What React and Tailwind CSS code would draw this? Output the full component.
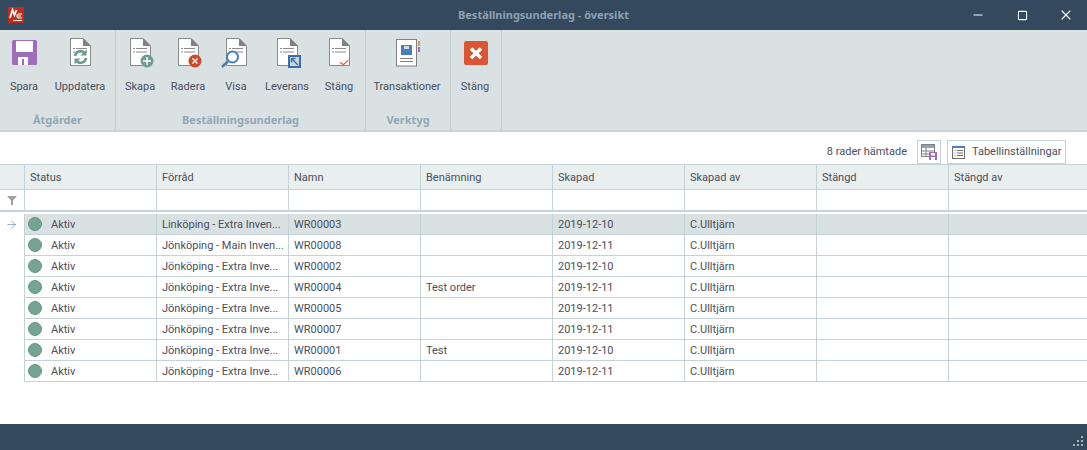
import React from 'react';
import { Minus, Square, X, ArrowRight } from 'lucide-react';

const COLUMNS = ['Status', 'Förråd', 'Namn', 'Benämning', 'Skapad', 'Skapad av', 'Stängd', 'Stängd av'];

const ROWS = [
  ['Linköping - Extra Inven...', 'WR00003', '', '2019-12-10'],
  ['Jönköping - Main Inven...', 'WR00008', '', '2019-12-11'],
  ['Jönköping - Extra Inve...', 'WR00002', '', '2019-12-10'],
  ['Jönköping - Extra Inve...', 'WR00004', 'Test order', '2019-12-11'],
  ['Jönköping - Extra Inve...', 'WR00005', '', '2019-12-11'],
  ['Jönköping - Extra Inve...', 'WR00007', '', '2019-12-11'],
  ['Jönköping - Extra Inve...', 'WR00001', 'Test', '2019-12-10'],
  ['Jönköping - Extra Inve...', 'WR00006', '', '2019-12-11'],
];

const Doc = ({ children }) => (
  <svg width="32" height="32" viewBox="0 0 32 32" fill="none">
    <path d="M6.5 1.5H19L26.5 9V28.5H6.5Z" fill="#fff" stroke="#8a8a8a" />
    <path d="M19 1L27 9H19Z" fill="#808080" />
    <path d="M9 11.5h2M12 11.5h11M9 15h2M12 15h11" stroke="#8a8a8a" />
    {children}
  </svg>
);

const icons = {
  save: (
    <svg width="32" height="32" viewBox="0 0 32 32">
      <rect x="4" y="3" width="25" height="25" rx="1.5" fill="#a06cbc" />
      <rect x="8" y="4" width="17" height="11" fill="#fff" />
      <rect x="10" y="20" width="10" height="8" fill="#fff" />
      <rect x="14" y="22" width="2" height="6" fill="#a06cbc" />
    </svg>
  ),
  refresh: (
    <Doc>
      <path d="M11 19a5.5 5.5 0 0 1 9.5-3" stroke="#6d9f8c" strokeWidth="2.6" />
      <path d="M22.5 12.5v6h-6Z" fill="#6d9f8c" />
      <path d="M22 21a5.5 5.5 0 0 1-9.5 3" stroke="#6d9f8c" strokeWidth="2.6" />
      <path d="M10.5 27.5v-6h6Z" fill="#6d9f8c" />
    </Doc>
  ),
  add: (
    <Doc>
      <circle cx="23" cy="24" r="6.5" fill="#6d9f8c" />
      <path d="M23 20v8M19 24h8" stroke="#fff" strokeWidth="1.4" />
    </Doc>
  ),
  del: (
    <Doc>
      <circle cx="23" cy="24" r="6.5" fill="#cc4a2c" />
      <path d="M20.5 21.5l5 5M25.5 21.5l-5 5" stroke="#fff" strokeWidth="1.4" />
    </Doc>
  ),
  view: (
    <Doc>
      <circle cx="12.5" cy="20" r="5.5" fill="#fff" stroke="#4a80b8" strokeWidth="2" />
      <path d="M8 24.5L2 30" stroke="#4a80b8" strokeWidth="2.6" />
    </Doc>
  ),
  delivery: (
    <Doc>
      <rect x="17" y="18" width="13" height="13" fill="#3f6da6" />
      <rect x="19" y="20" width="9" height="9" fill="#c5d6e6" />
      <path d="M20.5 21.5L27 28M20.5 21.5h4M20.5 21.5v4" stroke="#3f6da6" strokeWidth="1.4" />
    </Doc>
  ),
  close: (
    <Doc>
      <path d="M17 25.3l3.3 2.4 5-4.4" stroke="#e05a50" strokeWidth="1.3" />
    </Doc>
  ),
  transactions: (
    <svg width="32" height="32" viewBox="0 0 32 32">
      <rect x="5.5" y="2.5" width="20" height="26.5" fill="#fff" stroke="#808080" />
      <rect x="10" y="8" width="11" height="10" fill="#4a80b8" />
      <rect x="13" y="9" width="5" height="3" fill="#cfdcea" />
      <path d="M9 21.5h13M9 24.5h13" stroke="#808080" />
      <rect x="27" y="4" width="2" height="5" fill="#e8924a" />
      <rect x="27" y="10" width="2" height="5" fill="#a06cbc" />
    </svg>
  ),
  exit: (
    <svg width="32" height="32" viewBox="0 0 32 32">
      <rect x="5" y="4" width="24" height="24" rx="2" fill="#da5533" />
      <path d="M12 11.5l10 9.5M22 11.5l-10 9.5" stroke="#fff" strokeWidth="3.6" />
    </svg>
  ),
};

const RibbonButton = ({ icon, label, width }) => (
  <div className={`flex flex-col items-center ${width}`}>
    <div className="mt-[7px] h-[32px]">{icons[icon]}</div>
    <div className="mt-[11px] text-[11px] leading-[14px] whitespace-nowrap text-[#4a4f5c]">{label}</div>
  </div>
);

const RibbonGroup = ({ title, width, children }) => (
  <div className={`flex flex-col border-r border-[#c3cdcf] ${width}`}>
    <div className="flex h-[81px]">{children}</div>
    <div className="h-[19px] text-center font-['Noto_Sans',sans-serif] text-[11px] font-bold leading-[18px] text-[#93a7b8]">{title}</div>
  </div>
);

const Logo = () => (
  <svg width="16" height="16" viewBox="0 0 16 16">
    <rect width="16" height="16" fill="#bf2d1c" />
    <path d="M2 11L4.5 3 6.5 8 8.5 3" stroke="#fff" strokeWidth="1.8" fill="none" />
    <path d="M14 7H10.5Q9 7 9 9 9 11 10.5 11H14M9.5 9H13M5 13.5H14" stroke="#fff" strokeWidth="1.2" fill="none" />
  </svg>
);

const Cell = ({ children }) => (
  <div className="flex w-[132px] shrink-0 items-center overflow-hidden whitespace-nowrap border-r border-[#c5d3d9] pl-[5px] pt-[2px]">
    {children}
  </div>
);

const GridRow = ({ row, selected }) => (
  <div className="flex h-[21px]">
    <div className="flex w-[25px] shrink-0 items-center justify-center border-r border-[#c5d3d9] pr-[2px]">
      {selected && <ArrowRight size={13} strokeWidth={1} className="text-[#3f6da6]" />}
    </div>
    <div className={`flex flex-1 border-b border-[#c5d3d9] ${selected ? 'bg-[#d9e1e2]' : ''}`}>
      <Cell>
        <span className="-ml-[2px] -mt-[2px] h-[14px] w-[14px] rounded-full border border-[#659684] bg-[#75a592]" />
        <span className="ml-[9px]">Aktiv</span>
      </Cell>
      <Cell>{row[0]}</Cell>
      <Cell>{row[1]}</Cell>
      <Cell>{row[2]}</Cell>
      <Cell>{row[3]}</Cell>
      <Cell>C.Ulltjärn</Cell>
      <Cell />
      <div className="flex-1" />
    </div>
  </div>
);

export default function App() {
  return (
    <div className="flex h-[450px] w-[1087px] flex-col overflow-hidden bg-white font-['Roboto',sans-serif] text-[11px] text-[#4a4f5c]">
      {/* titlebar */}
      <div className="flex h-[30px] shrink-0 items-center bg-[#34495e] pl-[8px]">
        <Logo />
        <div className="flex-1 pl-[107px] text-center font-['Noto_Sans',sans-serif] text-[11px] font-bold text-[#8fa0b0]">Beställningsunderlag - översikt</div>
        <div className="flex items-center text-white">
          <div className="flex w-[44px] justify-center"><Minus size={14} strokeWidth={1.7} /></div>
          <div className="flex w-[44px] justify-center"><Square size={11} strokeWidth={2.2} /></div>
          <div className="flex w-[43px] justify-center"><X size={16} strokeWidth={1.7} /></div>
        </div>
      </div>

      {/* ribbon */}
      <div className="flex h-[102px] shrink-0 border-b-2 border-[#c9d2d5] bg-[#d9e1e2]">
        <RibbonGroup title="Åtgärder" width="w-[116px]">
          <RibbonButton icon="save" label="Spara" width="w-[48px]" />
          <RibbonButton icon="refresh" label="Uppdatera" width="w-[64px]" />
        </RibbonGroup>
        <RibbonGroup title="Beställningsunderlag" width="w-[250px]">
          <RibbonButton icon="add" label="Skapa" width="w-[48px]" />
          <RibbonButton icon="del" label="Radera" width="w-[48px]" />
          <RibbonButton icon="view" label="Visa" width="w-[48px]" />
          <RibbonButton icon="delivery" label="Leverans" width="w-[54px]" />
          <RibbonButton icon="close" label="Stäng" width="w-[50px]" />
        </RibbonGroup>
        <RibbonGroup title="Verktyg" width="w-[85px]">
          <RibbonButton icon="transactions" label="Transaktioner" width="w-[82px]" />
        </RibbonGroup>
        <RibbonGroup title="" width="w-[51px]">
          <RibbonButton icon="exit" label="Stäng" width="w-[48px]" />
        </RibbonGroup>
      </div>

      {/* toolbar */}
      <div className="flex h-[32px] shrink-0 items-end justify-end pr-[21px]">
        <span className="mr-[10px] mb-[4px]">8 rader hämtade</span>
        <button className="mr-[6px] flex h-[24px] w-[24px] items-center justify-center border border-[#c5d3d9]">
          <svg width="16" height="16" viewBox="0 0 16 16">
            <rect x="0.5" y="0.5" width="13" height="12" fill="#fff" stroke="#808080" />
            <rect x="1" y="1" width="12" height="3" fill="#8fa3b8" />
            <path d="M1 7h12M1 10h7M5 4v8" stroke="#808080" />
            <rect x="8" y="8" width="8" height="8" fill="#a06cbc" />
            <rect x="10" y="9" width="4" height="2.5" fill="#fff" />
            <rect x="10" y="13" width="4" height="3" fill="#fff" />
          </svg>
        </button>
        <button className="flex h-[24px] w-[119px] items-center border border-[#c5d3d9] pl-[3px]">
          <svg width="16" height="16" viewBox="0 0 16 16" className="shrink-0">
            <rect x="1.5" y="2.5" width="12" height="12" fill="#fff" stroke="#707070" />
            <rect x="1" y="2" width="13" height="2" fill="#4a80b8" />
            <path d="M3.5 6.5h1M6 6.5h6M3.5 9h1M6 9h6M3.5 11.5h1M6 11.5h6" stroke="#707070" />
          </svg>
          <span className="ml-[5px] pt-[1px] whitespace-nowrap">Tabellinställningar</span>
        </button>
      </div>

      {/* grid */}
      <div className="flex-1">
        <div className="flex h-[26px] border-y border-[#c5d3d9] bg-[#e9eeef]">
          <div className="w-[25px] shrink-0 border-r border-[#c5d3d9]" />
          {COLUMNS.slice(0, 7).map((name) => <Cell key={name}>{name}</Cell>)}
          <div className="flex flex-1 items-center pl-[5px] pt-[2px]">Stängd av</div>
        </div>
        <div className="flex h-[22px] border-b-2 border-[#c5d3d9]">
          <div className="flex w-[25px] shrink-0 items-center justify-center border-r border-[#c5d3d9] pr-[1px]">
            <svg width="10" height="10" viewBox="0 0 10 10"><path d="M0 1h10L6 5.5V10H4V5.5Z" fill="#a0a0a0" /></svg>
          </div>
          {COLUMNS.slice(0, 7).map((name) => <Cell key={name} />)}
        </div>
        <div className="mt-[2px]">
          {ROWS.map((row, i) => <GridRow key={row[1]} row={row} selected={i === 0} />)}
        </div>
      </div>

      {/* footer */}
      <div className="flex h-[26px] shrink-0 items-end justify-end bg-[#34495e] pb-[3px] pr-[3px]">
        <svg width="12" height="12" viewBox="0 0 12 12" fill="#a9b6c1">
          <rect x="9" y="1" width="2" height="2" />
          <rect x="5" y="5" width="2" height="2" />
          <rect x="9" y="5" width="2" height="2" />
          <rect x="1" y="9" width="2" height="2" />
          <rect x="5" y="9" width="2" height="2" />
          <rect x="9" y="9" width="2" height="2" />
        </svg>
      </div>
    </div>
  );
}
